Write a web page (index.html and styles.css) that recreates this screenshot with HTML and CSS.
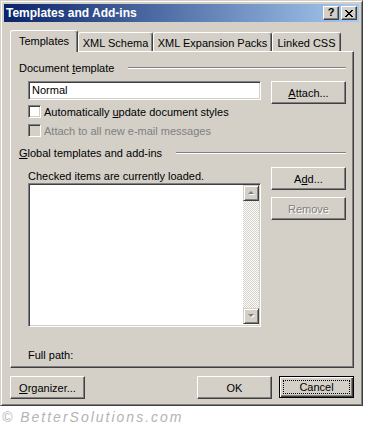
FILE: index.html
```html
<!DOCTYPE html>
<html lang="en">
<head>
  <meta charset="UTF-8" />
  <title>Templates and Add-ins</title>
  <link rel="stylesheet" href="styles.css">
</head>
<body>
  <div class="window">
    <div class="titlebar">
      <span class="title">Templates and Add-ins</span>
      <div class="caption-buttons">
        <span class="cap-btn help">?</span>
        <span class="cap-btn close">
          <svg width="8" height="7" viewBox="0 0 8 7">
            <path d="M0 0h2v1h-2zM6 0h2v1h-2zM1 1h2v1h-2zM5 1h2v1h-2zM2 2h4v1h-4zM3 3h2v1h-2zM2 4h4v1h-4zM1 5h2v1h-2zM5 5h2v1h-2zM0 6h2v1h-2zM6 6h2v1h-2z" fill="#000"/>
          </svg>
        </span>
      </div>
    </div>

    <div class="dialog">
      <div class="tabs">
        <div class="tab active">Templates</div>
        <div class="tab tab-schema">XML Schema</div>
        <div class="tab tab-packs">XML Expansion Packs</div>
        <div class="tab tab-css">Linked CSS</div>
      </div>

      <div class="panel">
        <div class="group-head">
          <span>Document <u>t</u>emplate</span>
          <i class="etch"></i>
        </div>
        <div class="row">
          <div class="textbox">Normal</div>
          <button class="btn"><u>A</u>ttach...</button>
        </div>
        <div class="check first">
          <span class="box"></span>
          <span>Automatically <u>u</u>pdate document styles</span>
        </div>
        <div class="check disabled">
          <span class="box"></span>
          <span>Attach to all new e-mail messages</span>
        </div>

        <div class="group-head global">
          <span><u>G</u>lobal templates and add-ins</span>
          <i class="etch"></i>
        </div>
        <div class="row list-row">
          <div class="list-col">
            <div class="hint">Checked items are currently loaded.</div>
            <div class="listbox">
              <div class="scrollbar">
                <span class="arrow-btn">
                  <svg width="7" height="5" viewBox="0 0 7 5"><path d="M4 1l3 3h-6z" fill="#fff"/><path d="M3 0l3 3h-6z" fill="#808080"/></svg>
                </span>
                <span class="track"></span>
                <span class="arrow-btn">
                  <svg width="7" height="5" viewBox="0 0 7 5"><path d="M1 1h6l-3 3z" fill="#fff"/><path d="M0 0h6l-3 3z" fill="#808080"/></svg>
                </span>
              </div>
            </div>
          </div>
          <div class="btn-col">
            <button class="btn">A<u>d</u>d...</button>
            <button class="btn disabled">Remove</button>
          </div>
        </div>
        <div class="full-path">Full path:</div>
      </div>

      <div class="footer">
        <button class="btn"><u>O</u>rganizer...</button>
        <button class="btn ok">OK</button>
        <button class="btn default"><span class="focus">Cancel</span></button>
      </div>
    </div>
  </div>
  <div class="watermark">© BetterSolutions.com</div>
</body>
</html>
```

FILE: styles.css
```css
body {
  margin: 0;
  background: #fff;
  font-family: 'Liberation Sans', Arial, sans-serif;
  font-size: 11px;
  color: #000;
}
u {
  text-decoration: underline;
  text-underline-offset: 1px;
}
.window {
  width: 363px;
  height: 406px;
  box-sizing: border-box;
  background: #d4d0c8;
  border: 1px solid;
  border-color: #d4d0c8 #404040 #404040 #d4d0c8;
  box-shadow: inset 1px 1px #fff, inset -1px -1px #808080;
  padding: 3px;
}
.titlebar {
  height: 18px;
  display: flex;
  align-items: center;
  justify-content: space-between;
  background: linear-gradient(to right, #0a246a, #a6caf0);
  padding: 0 2px;
}
.title {
  color: #fff;
  font-weight: bold;
  font-size: 12px;
}
.caption-buttons {
  display: flex;
  gap: 2px;
}
.cap-btn {
  width: 16px;
  height: 14px;
  box-sizing: border-box;
  background: #d4d0c8;
  border: 1px solid;
  border-color: #fff #404040 #404040 #fff;
  box-shadow: inset -1px -1px #808080;
  display: flex;
  align-items: center;
  justify-content: center;
  font-weight: bold;
  font-size: 11px;
  line-height: 1;
}
.cap-btn.help {
  padding-bottom: 1px;
}
.dialog {
  padding: 8px 2px 0 6px;
}
.tabs {
  display: flex;
  align-items: flex-end;
  height: 21px;
  position: relative;
  z-index: 1;
}
.tab {
  height: 19px;
  box-sizing: border-box;
  border: 1px solid;
  border-bottom: none;
  border-color: #fff #404040 #fff #fff;
  box-shadow: inset -1px 0 #808080;
  border-radius: 3px 3px 0 0;
  background: #d4d0c8;
  display: flex;
  align-items: center;
  justify-content: center;
  padding-top: 1px;
}
.tab.active {
  width: 68px;
  height: 22px;
  margin-bottom: -1px;
  padding-bottom: 2px;
}
.tab-schema {
  width: 75px;
}
.tab-packs {
  width: 119px;
}
.tab-css {
  width: 69px;
}
.panel {
  width: 344px;
  height: 317px;
  box-sizing: border-box;
  border: 1px solid;
  border-color: #fff #404040 #404040 #fff;
  box-shadow: inset -1px -1px #808080;
  padding: 9px 7px 0 8px;
}
.group-head {
  display: flex;
  align-items: center;
  height: 14px;
  line-height: 14px;
}
.etch {
  flex: 1;
  height: 0;
  border-top: 1px solid #808080;
  border-bottom: 1px solid #fff;
  margin-left: 14px;
}
.group-head.global {
  margin-top: 6px;
}
.row {
  display: flex;
  justify-content: space-between;
  margin-top: 6px;
  padding-left: 9px;
}
.textbox {
  width: 233px;
  height: 19px;
  box-sizing: border-box;
  background: #fff;
  border: 1px solid;
  border-color: #808080 #fff #fff #808080;
  box-shadow: inset 1px 1px #404040, inset -1px -1px #d4d0c8;
  padding: 0 3px;
  line-height: 17px;
}
.btn {
  width: 75px;
  height: 23px;
  box-sizing: border-box;
  background: #d4d0c8;
  border: 1px solid;
  border-color: #fff #404040 #404040 #fff;
  box-shadow: inset -1px -1px #808080;
  font-family: inherit;
  font-size: 11px;
  color: #000;
  padding: 0;
}
.btn.disabled {
  color: #808080;
  text-shadow: 1px 1px #fff;
}
.check {
  display: flex;
  align-items: center;
  height: 19px;
  padding-left: 9px;
  gap: 3px;
}
.check.first {
  margin-top: -2px;
}
.box {
  width: 13px;
  height: 13px;
  box-sizing: border-box;
  background: #fff;
  border: 1px solid;
  border-color: #808080 #fff #fff #808080;
  box-shadow: inset 1px 1px #404040, inset -1px -1px #d4d0c8;
}
.check.disabled {
  color: #808080;
}
.check.disabled .box {
  background: #d4d0c8;
}
.list-row {
  margin-top: 7px;
}
.list-col {
  width: 233px;
}
.hint {
  margin-top: 2px;
  line-height: 14px;
}
.listbox {
  height: 144px;
  box-sizing: border-box;
  background: #fff;
  border: 1px solid;
  border-color: #808080 #fff #fff #808080;
  box-shadow: inset 1px 1px #404040, inset -1px -1px #d4d0c8;
  padding: 1px;
  display: flex;
  justify-content: flex-end;
}
.scrollbar {
  width: 16px;
  display: flex;
  flex-direction: column;
  margin-bottom: 1px;
}
.arrow-btn {
  width: 16px;
  height: 16px;
  box-sizing: border-box;
  background: #d4d0c8;
  border: 1px solid;
  border-color: #d4d0c8 #404040 #404040 #d4d0c8;
  box-shadow: inset 1px 1px #fff, inset -1px -1px #808080;
  display: flex;
  align-items: center;
  justify-content: center;
}
.track {
  flex: 1;
  background: conic-gradient(#fff 25%, #d4d0c8 0 50%, #fff 0 75%, #d4d0c8 0);
  background-size: 2px 2px;
}
.btn-col {
  display: flex;
  flex-direction: column;
  gap: 7px;
}
.full-path {
  margin-top: 21px;
  padding-left: 9px;
  line-height: 14px;
}
.footer {
  display: flex;
  margin-top: 8px;
  width: 344px;
}
.footer .ok {
  margin-left: auto;
  margin-right: 7px;
}
.btn.default {
  height: 22px;
  border: 1px solid #000;
  box-shadow: inset 1px 1px #fff, inset -1px -1px #404040, inset -2px -2px #808080;
  padding: 3px;
}
.focus {
  display: flex;
  align-items: center;
  justify-content: center;
  height: 100%;
  box-sizing: border-box;
  border: 1px dotted #000;
}
.watermark {
  margin: 3px 0 0 2px;
  font-style: italic;
  font-size: 14px;
  letter-spacing: 2px;
  color: #b4b4b4;
  line-height: 16px;
}
```
